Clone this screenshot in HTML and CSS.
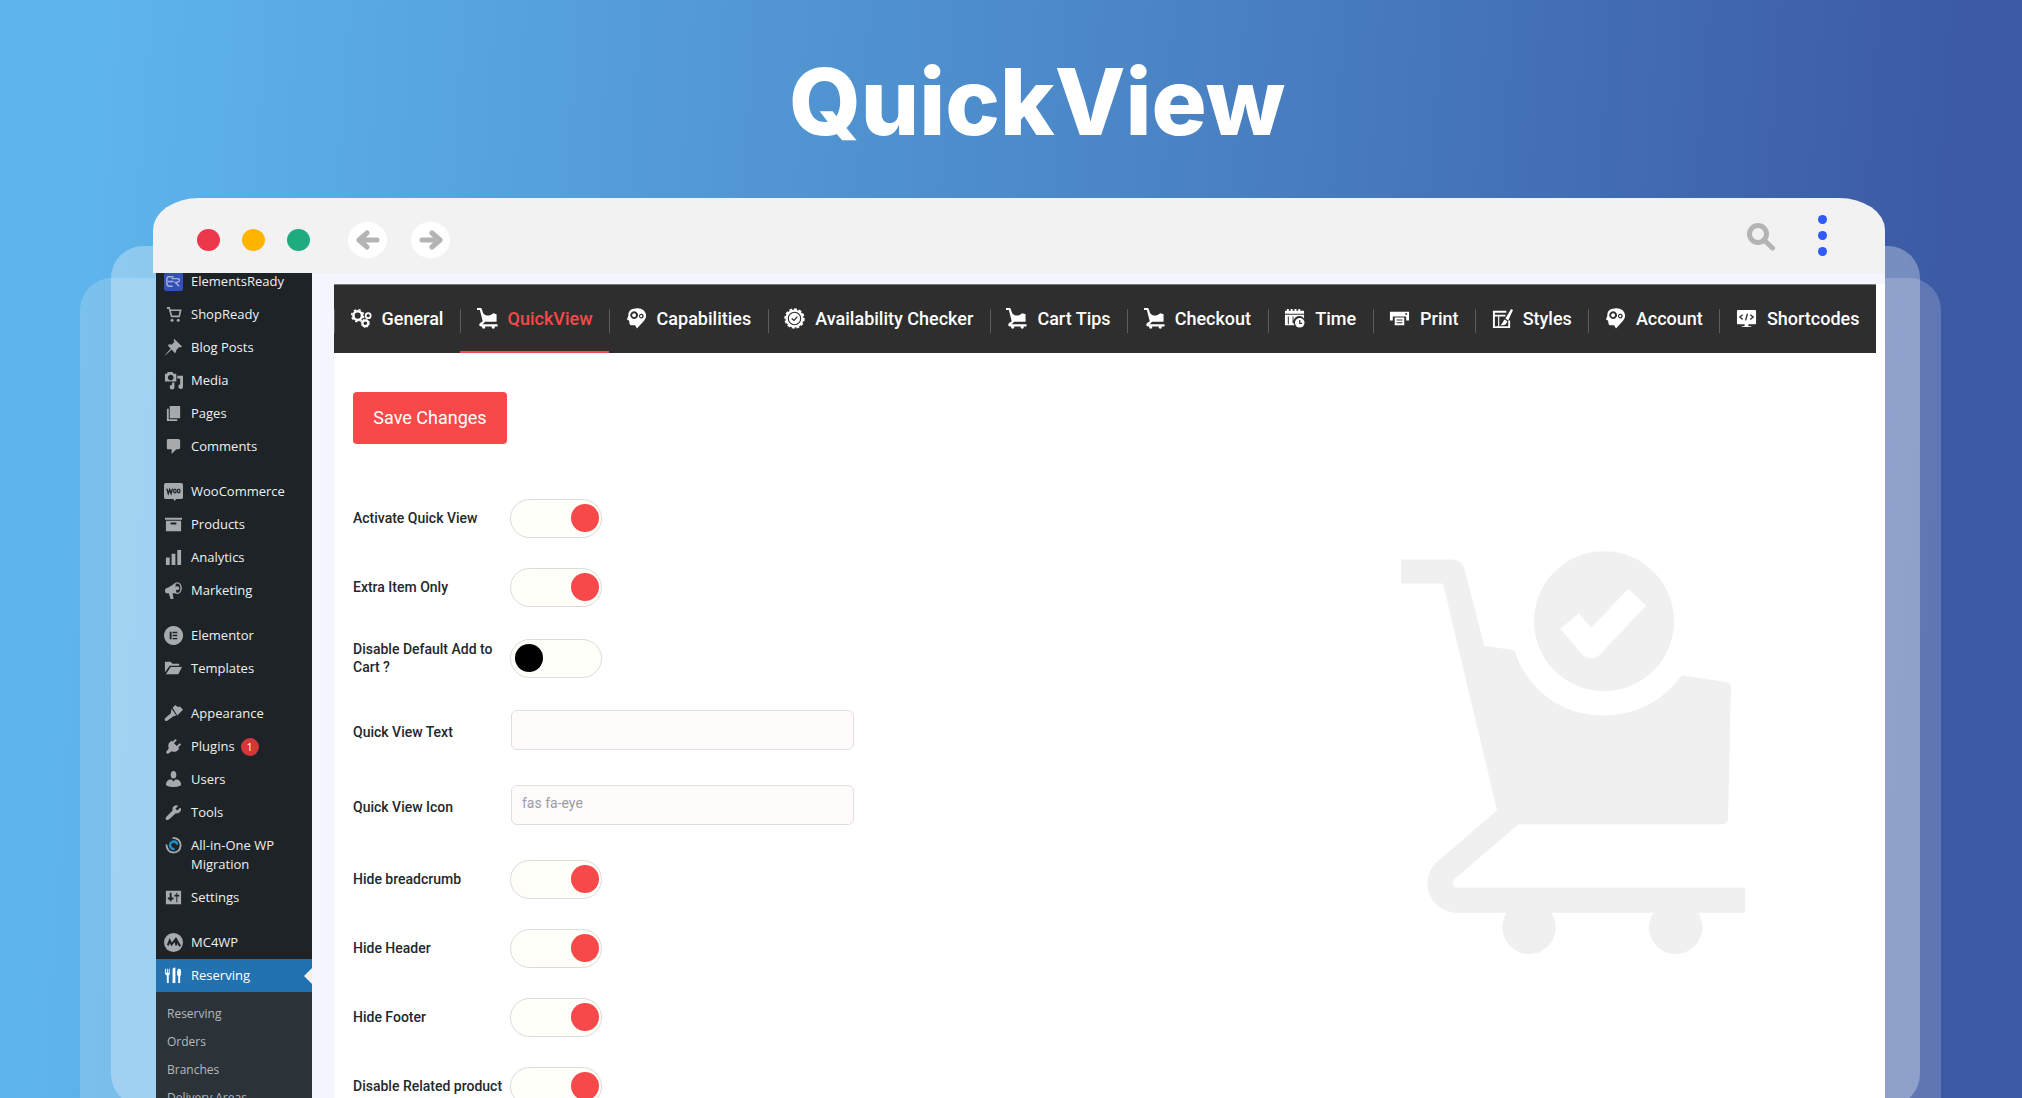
FILE: index.html
```html
<!DOCTYPE html>
<html lang="en">
<head>
<meta charset="utf-8">
<meta name="viewport" content="width=device-width, initial-scale=1">
<title>QuickView</title>
<link rel="stylesheet" href="styles.css">
</head>
<body>
<svg class="symbols" aria-hidden="true">
  <symbol id="cart" viewBox="63 65 1032 1208">
    <path d="M63 90H217Q244 92 253 118L313 349L403 362C440 480 545 558 668 558C765 558 850 515 905 437L1041 458Q1053 462 1053 474L1044 870Q1043 882 1031 884H416L222 1050C214 1060 219 1073 232 1075H1095V1150H954A80 80 0 1 1 820 1150H514A80 80 0 1 1 380 1150H232A88 88 0 0 1 168 1000L351 842L189 162H63Z"/>
    <path fill-rule="evenodd" d="M672 65A210 210 0 1 0 672.1 65ZM541 298L597 251L634 295L745 178L799 228L660 375Q634 398 606 375Z"/>
  </symbol>
  <symbol id="trolley" viewBox="0 0 22 22">
    <path d="M0 0H4.500L6.500 5.500C9 8.500 13 9 17 5.500L20.500 6.500V14.500H8.500L6 17H21.500V19.300H4C2 19.300 2 17 3 16L6 14L3 2H0Z"/><circle cx="7" cy="20" r="1.700"/><circle cx="17" cy="20" r="1.700"/>
  </symbol>
  <symbol id="head" viewBox="0 0 22 22">
    <path fill-rule="evenodd" d="M10 .5C16 -.5 21 3 21 8C21 12 18 14 16 16.500L11.500 21.500L9.500 18H5C3 17 4 14 3 13L1 12L2.500 8C2 4 5 .5 10 .5ZM8.500 3.500A4 4 0 1 0 8.600 3.500ZM8.500 5.500A2 2 0 1 1 8.400 5.500ZM16 6A2.500 2.500 0 1 0 16.100 6ZM16 7.400A1.100 1.100 0 1 1 15.900 7.400Z"/>
  </symbol>
</svg>

<h1 class="headline">QuickView</h1>

<div class="stage">
  <div class="layer layer-far"></div>
  <div class="layer layer-near"></div>
  <div class="window">
    <header class="titlebar">
      <span class="light red"></span><span class="light amber"></span><span class="light green"></span>
      <button class="round" type="button" aria-label="Back"><svg viewBox="0 0 24 20"><path d="M21 10H3M11 3L3 10L11 17"/></svg></button>
      <button class="round" type="button" aria-label="Forward"><svg viewBox="0 0 24 20"><path d="M3 10H21M13 3L21 10L13 17"/></svg></button>
      <button class="search" type="button" aria-label="Search"><svg viewBox="0 0 28 28"><circle cx="11" cy="11" r="8.500"/><path d="M17 17L25.500 25"/></svg></button>
      <button class="more" type="button" aria-label="More"><i></i><i></i><i></i></button>
    </header>

    <div class="workspace">
      <nav class="sidebar" aria-label="Admin menu">
        <ul>
          <li><a href="#"><svg viewBox="0 0 20 20"><rect width="20" height="20" rx="3" fill="#3350b8"/><path fill="none" stroke="#a7b0dc" stroke-width="1.500" d="M10 5H5Q3 5 3 8V12Q3 15 6 15H9M4 10H10M8 7H14Q17 7 16 9.500Q15 11 12 11L16 15"/></svg>ElementsReady</a></li>
          <li><a href="#"><svg viewBox="0 0 20 20"><path fill="none" stroke="#a7aaad" stroke-width="1.700" d="M3 3H5.500L8 12H16L17.500 5.500H7"/><circle cx="8.500" cy="16" r="1.600"/><circle cx="15" cy="16" r="1.600"/></svg>ShopReady</a></li>
          <li><a href="#"><svg viewBox="0 0 20 20"><path d="M11 1L19 9L17 10L16 9.500L13 12.500Q13 15 11.500 16L8 12L2 18L1 18.500L1.500 17.500L7 11L4 8Q5.500 6 8 7L11 4L10 2Z"/></svg>Blog Posts</a></li>
          <li><a href="#"><svg viewBox="0 0 20 20"><path fill-rule="evenodd" d="M1 3H3L4 1H9L10 3H13V11H1ZM7 4A3 3 0 1 0 7.100 4ZM14 5H20V17A2.500 2.500 0 1 1 17 14V8H14ZM11 12V17A2.500 2.500 0 1 1 8.500 14.500V12Z"/></svg>Media</a></li>
          <li><a href="#"><svg viewBox="0 0 20 20"><path d="M6 2H17V15H6ZM3 5H5V16H14V18H3Z"/></svg>Pages</a></li>
          <li><a href="#"><svg viewBox="0 0 20 20"><path d="M4 2H15Q17 2 17 4V11Q17 13 15 13H13L8 18V13H4Q3 13 3 11V4Q3 2 4 2Z"/></svg>Comments</a></li>
        </ul>
        <ul>
          <li><a href="#"><svg viewBox="0 0 20 20"><path d="M2 1H18Q20 1 20 3V16Q20 18 18 18H13L11 20L10 18H2Q0 18 0 16V3Q0 1 2 1Z"/><path fill="none" stroke="#1d2327" stroke-width="1.500" d="M3 7L4.500 12L6 8L7.500 12L9 7"/><ellipse cx="11.500" cy="9.500" rx="1.300" ry="2" fill="none" stroke="#1d2327" stroke-width="1.300"/><ellipse cx="15.500" cy="9.500" rx="1.300" ry="2" fill="none" stroke="#1d2327" stroke-width="1.300"/></svg>WooCommerce</a></li>
          <li><a href="#"><svg viewBox="0 0 20 20"><path fill-rule="evenodd" d="M1 3H19V5H1ZM2 6H18V17H2ZM7 8V10H13V8Z"/></svg>Products</a></li>
          <li><a href="#"><svg viewBox="0 0 20 20"><path d="M2 10H6V18H2ZM8 6H12V18H8ZM14 2H18V18H14Z"/></svg>Analytics</a></li>
          <li><a href="#"><svg viewBox="0 0 20 20"><path d="M12 2L6 6L2 8Q0 10 2 13L5 13L7 19H10L9 13L13 13Z"/><ellipse cx="14" cy="7.500" rx="4" ry="5.500" fill="none" stroke="#a7aaad" stroke-width="1.500"/><circle cx="14" cy="7.500" r="2"/></svg>Marketing</a></li>
        </ul>
        <ul>
          <li><a href="#"><svg viewBox="0 0 20 20"><path fill-rule="evenodd" d="M10 0A10 10 0 1 0 10.100 0ZM6 6H8V14H6ZM9 6H14V7.500H9ZM9 9.200H14V10.800H9ZM9 12.500H14V14H9Z"/></svg>Elementor</a></li>
          <li><a href="#"><svg viewBox="0 0 20 20"><path d="M1 3H7L9 5H16V7H6L1 14ZM7 8.500H19L15 16H2Z"/></svg>Templates</a></li>
        </ul>
        <ul>
          <li><a href="#"><svg viewBox="0 0 20 20"><path d="M9 4L12 1L14 3H17L20 6L15 11L14 12ZM8 5L13 12L10 13L3 18Q0 18 1 15L7 10Z"/></svg>Appearance</a></li>
          <li><a href="#"><svg viewBox="0 0 20 20"><path d="M12 2L13.500 3.500L10.500 6.500L13.500 9.500L16.500 6.500L18 8L15 11L16 12Q13 17 8 15L4 18L2 16L5 12Q3 7 8 4L9 5Z"/></svg>Plugins<span class="count">1</span></a></li>
          <li><a href="#"><svg viewBox="0 0 20 20"><path d="M10 1Q13 1 13 5Q13 9 10 9Q7 9 7 5Q7 1 10 1ZM6 10H8L10 12L12 10H14Q18 11 18 16Q10 20 2 16Q2 11 6 10Z"/></svg>Users</a></li>
          <li><a href="#"><svg viewBox="0 0 20 20"><path d="M17 5L14 8L12 6L15 3Q11 1 9 5V8L2 15Q1 18 4 18Q6 17 12 11Q18 11 18 6Z"/></svg>Tools</a></li>
          <li><a class="two-line" href="#"><svg viewBox="0 0 20 20"><path fill="none" stroke="#a7aaad" stroke-width="2" d="M9 2Q17 2 17.500 10Q17 17 10 17.500Q3 17 2.500 9"/><path fill="none" stroke="#1f8fd0" stroke-width="2.500" d="M14 9Q13 5 9 6Q5 8 7 12Q9 14 11 14"/></svg>All-in-One WP Migration</a></li>
          <li><a href="#"><svg viewBox="0 0 20 20"><path fill-rule="evenodd" d="M2 3H18V17H2ZM6 5V10H4V12H6V14H8V12H10V10H8V5ZM13 5V7H11V9H13V15H14V9H16V7H14V5Z"/></svg>Settings</a></li>
        </ul>
        <ul>
          <li><a href="#"><svg viewBox="0 0 20 20"><circle cx="10" cy="10" r="10"/><path fill="none" stroke="#1d2327" stroke-width="2.200" d="M4 13L6 8L8 12L12 7L13 13M11 10L13 7L17 14"/></svg>MC4WP</a></li>
          <li><a class="current" href="#"><svg viewBox="0 0 20 20"><path d="M1 3H2V7H3V3H4V7H5V3H6V8Q6 10 5 10V18H3V10Q1 9 1 7ZM9 3Q11 1 12 2V18H9ZM15 3Q18 2 18 6Q18 10 17 11V18H15V11Q13 9 14 5Z"/></svg>Reserving</a></li>
        </ul>
        <ul class="submenu">
          <li><a href="#">Reserving</a></li>
          <li><a href="#">Orders</a></li>
          <li><a href="#">Branches</a></li>
          <li><a href="#">Delivery Areas</a></li>
        </ul>
      </nav>

      <main class="panel">
        <nav class="tabs" aria-label="Settings sections">
          <a href="#"><svg viewBox="0 0 22 22"><g fill="none" stroke="#fff"><circle cx="7" cy="8" r="4.500" stroke-width="2.600"/><circle cx="7" cy="8" r="6.300" stroke-width="1.500" stroke-dasharray="2.500 2.450"/><circle cx="18" cy="8" r="2.600" stroke-width="1.800"/><circle cx="15" cy="16" r="3" stroke-width="2.200"/><circle cx="15" cy="16" r="4.300" stroke-width="1" stroke-dasharray="1.700 1.700"/></g></svg>General</a>
          <a class="active" href="#"><svg><use href="#trolley"/></svg>QuickView</a>
          <a href="#"><svg><use href="#head"/></svg>Capabilities</a>
          <a href="#"><svg viewBox="0 0 22 22"><circle cx="11" cy="11" r="9.500"/><circle cx="11" cy="11" r="9.700" fill="none" stroke="#fff" stroke-width="2" stroke-dasharray="3 2"/><circle cx="11" cy="11" r="6.500" fill="none" stroke="#2e2e2e" stroke-width="1.200"/><path fill="none" stroke="#2e2e2e" stroke-width="1.400" d="M8 11L10.500 13L14 9"/></svg>Availability Checker</a>
          <a href="#"><svg><use href="#trolley"/></svg>Cart Tips</a>
          <a href="#"><svg><use href="#trolley"/></svg>Checkout</a>
          <a href="#"><svg viewBox="0 0 22 22"><path fill-rule="evenodd" d="M1 3H3V1H5V3H7V1H9V3H11V1H13V3H15V1H17V3H21V6H1ZM1 7H21V11A6 6 0 0 0 11 18H1ZM4 9V17H5V9ZM9 9V16H10V9Z"/><circle cx="16.500" cy="15.500" r="5"/><path fill="none" stroke="#2e2e2e" stroke-width="1.300" d="M16.500 12.500V16H19"/></svg>Time</a>
          <a href="#"><svg viewBox="0 0 22 22"><path fill-rule="evenodd" d="M1 4H21V13H18V9H4V13H1ZM17 5.500V7H19V5.500ZM6 10H16V18H6ZM8 12V13H14V12ZM8 15V16H14V15Z"/></svg>Print</a>
          <a href="#"><svg viewBox="0 0 22 22"><path fill="none" stroke="#fff" stroke-width="2" d="M15 4H2V20H18V13M2 8H14"/><path fill="none" stroke="#fff" stroke-width="1.200" d="M7 8V20"/><path d="M20 1L22 2L17 13L14 11ZM13 12L16 14Q15 19 9 18Q11 16 13 12Z"/></svg>Styles</a>
          <a href="#"><svg><use href="#head"/></svg>Account</a>
          <a href="#"><svg viewBox="0 0 22 22"><path d="M2 2H20Q21 2 21 3V16Q21 17 20 17H13V19H16V20H6V19H9V17H2Q1 17 1 16V3Q1 2 2 2Z"/><path fill="none" stroke="#2e2e2e" stroke-width="1.400" d="M7 7L4 9.500L7 12M15 7L18 9.500L15 12M12 6L10 13"/></svg>Shortcodes</a>
        </nav>

        <form class="settings">
          <div class="fields">
            <button class="save" type="button">Save Changes</button>
            <div class="row"><label for="f1">Activate Quick View</label><input class="toggle" id="f1" type="checkbox" checked></div>
            <div class="row"><label for="f2">Extra Item Only</label><input class="toggle" id="f2" type="checkbox" checked></div>
            <div class="row tall"><label for="f3">Disable Default Add to Cart ?</label><input class="toggle" id="f3" type="checkbox"></div>
            <div class="row text"><label for="f4">Quick View Text</label><input class="box" id="f4" type="text"></div>
            <div class="row text"><label for="f5">Quick View Icon</label><input class="box" id="f5" type="text" placeholder="fas fa-eye"></div>
            <div class="row"><label for="f6">Hide breadcrumb</label><input class="toggle" id="f6" type="checkbox" checked></div>
            <div class="row"><label for="f7">Hide Header</label><input class="toggle" id="f7" type="checkbox" checked></div>
            <div class="row"><label for="f8">Hide Footer</label><input class="toggle" id="f8" type="checkbox" checked></div>
            <div class="row"><label for="f9">Disable Related product</label><input class="toggle" id="f9" type="checkbox" checked></div>
          </div>
          <svg class="art" aria-hidden="true"><use href="#cart"/></svg>
        </form>
      </main>
    </div>
  </div>
</div>
</body>
</html>
```
FILE: styles.css
```css
* { box-sizing: border-box; }

body {
  margin: 0;
  height: 100vh;
  overflow: hidden;
  display: flex;
  flex-direction: column;
  background: linear-gradient(94deg, #5eb5ec 4%, #4b86c6 54%, #3c5aa4 94%);
  font-family: Roboto, "Liberation Sans", sans-serif;
}

a { color: inherit; text-decoration: none; }
ul { margin: 0; padding: 0; list-style: none; }
button { border: 0; padding: 0; font: inherit; }
.symbols { position: absolute; width: 0; height: 0; }

.headline {
  margin: 0;
  padding: 42px 0 0 52px;
  height: 198px;
  flex: none;
  color: #fff;
  font: 800 92px/120px Inter, sans-serif;
  text-align: center;
}

.stage {
  position: relative;
  flex: 1;
  min-height: 0;
  padding: 0 137px 0 153px;
}

/* translucent sheets stacked behind the browser window */
.layer {
  position: absolute;
  background: rgba(255, 255, 255, .3);
  border-radius: 32px;
}
.layer-near { top: 48px; left: 111px; right: 102px; bottom: -8px; }
.layer-far { top: 80px; left: 80px; right: 81px; bottom: -40px; background: rgba(255, 255, 255, .18); }

.window {
  position: relative;
  height: 100%;
  display: flex;
  flex-direction: column;
}

.titlebar {
  flex: none;
  height: 75px;
  padding: 8px 58px 0 44px;
  display: flex;
  align-items: center;
  background: #f2f2f2;
  border-radius: 46px 46px 0 0 / 32px 32px 0 0;
}
.light { width: 23px; height: 22px; margin-right: 22px; border-radius: 50%; }
.red { background: #ed364b; }
.amber { background: #ffb400; }
.green { background: #1fab80; }
.round {
  width: 39px;
  height: 36px;
  margin: 0 8px 0 16px;
  border-radius: 50%;
  background: #fff;
  display: grid;
  place-items: center;
}
.round svg { width: 24px; height: 20px; }
.round path, .search svg { fill: none; stroke: #b4b4b4; stroke-width: 5; stroke-linecap: round; stroke-linejoin: round; }
.search { margin-left: auto; width: 28px; height: 34px; background: none; display: flex; align-items: flex-start; }
.search svg { width: 28px; height: 28px; }
.more { width: 9px; height: 50px; margin-left: 43px; background: none; display: grid; gap: 7px; align-content: start; }
.more i { width: 9px; height: 9px; border-radius: 50%; background: #2f5af5; }

.workspace {
  flex: 1;
  min-height: 0;
  margin-left: 3px;
  display: flex;
  background: #f5f5ff;
}

.sidebar {
  flex: none;
  width: 156px;
  overflow: hidden;
  margin-right: 22px;
  background: #1d2327;
  color: #f0f0f1;
  font: 13px/19px "Open Sans", "Noto Sans", sans-serif;
}
.sidebar ul + ul { margin-top: 12px; }
.sidebar ul:first-child { margin-top: -8px; }
.sidebar a { display: flex; align-items: center; height: 33px; padding-left: 8px; gap: 8px; }
.sidebar svg { flex: none; width: 19px; height: 19px; fill: #a7aaad; }
.sidebar .two-line { height: 52px; align-items: flex-start; padding-top: 7px; }
.sidebar .current { position: relative; background: #2271b1; color: #fff; }
.sidebar .current svg { fill: #fff; }
.sidebar .current::after {
  content: "";
  position: absolute;
  top: 9px;
  right: 0;
  border: solid transparent;
  border-width: 8px 8px 8px 0;
  border-right-color: #f0f0f1;
}
.count {
  width: 18px;
  height: 18px;
  margin-left: -2px;
  border-radius: 50%;
  background: #d63638;
  color: #fff;
  font-size: 11px;
  line-height: 18px;
  text-align: center;
}
.sidebar .submenu { margin-top: 0; padding-top: 7px; background: #2c3338; color: #b4b9be; font-size: 12px; }
.sidebar .submenu a { height: 28px; padding-left: 11px; }

.panel {
  flex: 1;
  min-width: 0;
  margin-top: 11px;
  overflow: hidden;
  background: #fff;
}

.tabs {
  height: 69px;
  margin-right: 9px;
  display: flex;
  background: #2e2e2e;
  border-top: 1px solid #777b80;
  color: #fff;
  font-size: 18px;
  font-weight: 500;
}
.tabs a {
  flex: 1 1 auto;
  display: flex;
  align-items: center;
  justify-content: center;
  gap: 10px;
  white-space: nowrap;
  border-bottom: 2px solid transparent;
  background: linear-gradient(#5c5c5c, #5c5c5c) 0 24px / 1px 24px no-repeat;
}
.tabs svg { width: 21px; height: 21px; fill: #fff; }
.tabs .active { color: #f74949; border-bottom-color: #f74949; }

.settings { display: flex; justify-content: space-between; padding: 39px 140px 0 19px; }
.save {
  width: 154px;
  height: 52px;
  padding-bottom: 2px;
  margin-bottom: 41px;
  border-radius: 4px;
  background: #f74949;
  color: #fff;
  font-size: 18px;
  display: block;
}
.row { display: flex; align-items: center; padding: 14px 0 16px; }
.row label { width: 157px; padding: 0 4px 2px 0; color: #23282d; font-size: 14px; font-weight: 500; line-height: 18px; }
.row.tall { padding: 16px 0 18px; }
.row.text { padding-bottom: 21px; }
.row.text label { width: 158px; padding-top: 6px; }

.toggle {
  appearance: none;
  width: 92px;
  height: 39px;
  margin: 0;
  padding: 4px;
  border: 1px solid #dcdcde;
  border-radius: 20px;
  background: #fffef9;
  display: flex;
}
.toggle::before { content: ""; width: 28px; height: 28px; border-radius: 50%; background: #000; }
.toggle:checked { justify-content: flex-end; padding-right: 2px; }
.toggle:checked::before { background: #f74949; }

.box {
  width: 343px;
  height: 40px;
  padding: 0 10px 4px;
  border: 1px solid #e0dfe0;
  border-radius: 6px;
  background: #fffbfb;
  font: 14px Roboto, sans-serif;
}
.box::placeholder { color: #9a9da3; }

.art { flex: none; width: 344px; height: 403px; margin-top: 159px; fill: #f0f0f0; }
```
